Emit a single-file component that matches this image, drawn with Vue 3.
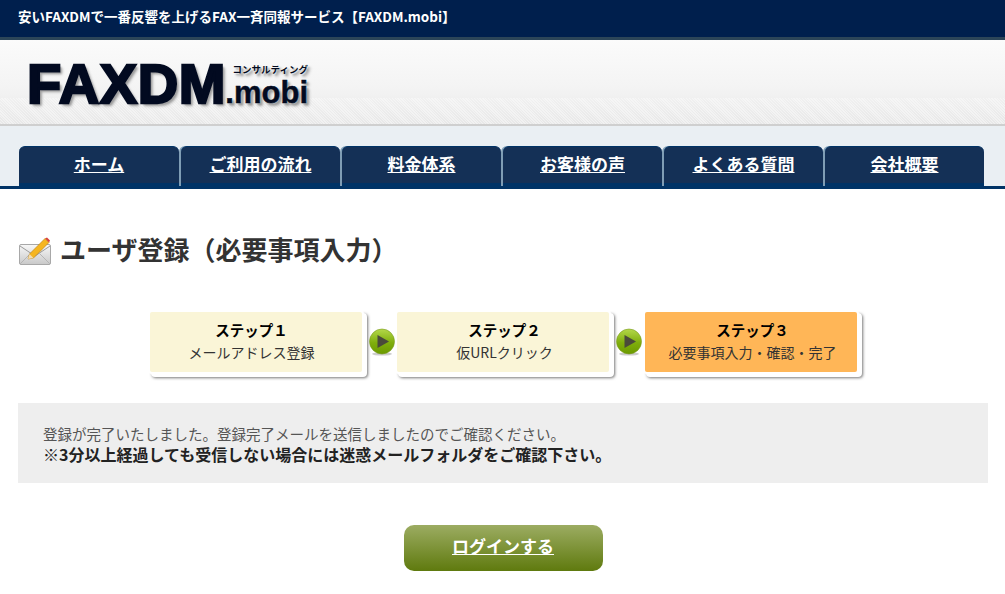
<script setup>
const navItems = ['ホーム', 'ご利用の流れ', '料金体系', 'お客様の声', 'よくある質問', '会社概要']
const steps = [
  { title: 'ステップ１', text: 'メールアドレス登録', active: false },
  { title: 'ステップ２', text: '仮URLクリック', active: false },
  { title: 'ステップ３', text: '必要事項入力・確認・完了', active: true },
]
</script>

<template>
  <div class="page">
    <div class="topbar">安いFAXDMで一番反響を上げるFAX一斉同報サービス【FAXDM.mobi】</div>
    <header class="header">
      <div class="logo">
        <span class="logo-main">FAXDM</span>
        <span class="logo-side">
          <span class="logo-sub">コンサルティング</span>
          <span class="logo-mobi">.mobi</span>
        </span>
      </div>
    </header>
    <nav class="nav">
      <a v-for="item in navItems" :key="item" class="tab">{{ item }}</a>
    </nav>
    <main class="main">
      <h1 class="title">
        <svg class="mail" viewBox="0 0 32 28" width="32" height="28">
          <defs>
            <linearGradient id="env" x1="0" y1="0" x2="0" y2="1">
              <stop offset="0" stop-color="#f8f8f8" />
              <stop offset="1" stop-color="#c9c9c9" />
            </linearGradient>
          </defs>
          <rect x="0.5" y="7.5" width="31" height="20" rx="1.5" fill="url(#env)" stroke="#a8a8a8" />
          <path d="M1 9 L16 19 L31 9" fill="none" stroke="#9a9a9a" />
          <path d="M1 27 L12 16 M31 27 L20 16" fill="none" stroke="#b5b5b5" />
          <path d="M9 22 L10.5 17 L26 1.5 L30 5.5 L14.5 21 Z" fill="#f5b51f" stroke="#b67c10" stroke-width="0.6" />
          <path d="M9 22 L10.5 17 L14.5 21 Z" fill="#f3dcb0" />
          <path d="M26 1.5 L28 0.5 L31 3.5 L30 5.5 Z" fill="#d8433b" />
        </svg>
        <span class="title-text">ユーザ登録（必要事項入力）</span>
      </h1>

      <div class="steps">
        <template v-for="(step, i) in steps" :key="step.title">
          <div class="step" :class="{ active: step.active }">
            <strong>{{ step.title }}</strong>
            <span>{{ step.text }}</span>
          </div>
          <svg v-if="i < steps.length - 1" class="arrow" viewBox="0 0 28 28" width="28" height="28">
            <defs>
              <linearGradient :id="'ball' + i" x1="0" y1="0" x2="0" y2="1">
                <stop offset="0" stop-color="#b4d84a" />
                <stop offset="0.55" stop-color="#7fae0c" />
                <stop offset="1" stop-color="#6b9a00" />
              </linearGradient>
            </defs>
            <ellipse cx="14" cy="26" rx="10" ry="1.6" fill="#ccc" />
            <circle cx="14" cy="13.5" r="12.5" :fill="'url(#ball' + i + ')'" stroke="#7a9a20" stroke-width="0.6" />
            <path d="M9.5 7 L21 13.5 L9.5 20 Z" fill="#4a4a3a" />
          </svg>
        </template>
      </div>

      <div class="message">
        <p>登録が完了いたしました。登録完了メールを送信しましたのでご確認ください。</p>
        <p class="strong">※3分以上経過しても受信しない場合には迷惑メールフォルダをご確認下さい。</p>
      </div>

      <div class="action">
        <a class="login">ログインする</a>
      </div>
    </main>
  </div>
</template>

<style scoped>
.page {
  width: 1005px;
  height: 594px;
  overflow: hidden;
  background: #fff;
  font-family: "Noto Sans CJK JP", "Liberation Sans", sans-serif;
  color: #333;
}
.topbar {
  height: 37px;
  box-sizing: content-box;
  border-bottom: 3px solid #2c4558;
  background: #001f4d;
  color: #fff;
  font-size: 13.5px;
  font-weight: 700;
  line-height: 33px;
  padding-left: 18px;
}
.header {
  height: 84px;
  border-bottom: 2px solid #cfcfcf;
  background:
    repeating-linear-gradient(45deg, transparent 0 1px, rgba(255, 255, 255, 0.4) 1px 2px) bottom / 100% 26px no-repeat,
    linear-gradient(#fbfbfb, #f4f4f4 55%, #e8e8e8);
  box-sizing: content-box;
  padding-left: 27px;
}
.logo {
  display: flex;
  align-items: flex-start;
  padding-top: 12px;
  color: #020a20;
  font-family: "Liberation Sans", sans-serif;
  font-weight: 700;
  text-shadow: 0 0 2px #fff, 2px 2px 2px #999, 3px 3px 3px #aaa;
}
.logo-main {
  font-size: 56px;
  line-height: 64px;
  -webkit-text-stroke: 2.4px #020a20;
  letter-spacing: 0.6px;
}
.logo-side {
  display: flex;
  flex-direction: column;
  align-items: flex-end;
  width: 82px;
  flex: none;
}
.logo-sub {
  font-family: "Noto Sans CJK JP", sans-serif;
  font-size: 9.5px;
  line-height: 10px;
  margin-top: 12px;
  white-space: nowrap;
}
.logo-mobi {
  font-size: 31px;
  line-height: 32px;
  margin-top: 3px;
  -webkit-text-stroke: 0.5px #020a20;
}
.nav {
  display: flex;
  height: 60px;
  box-sizing: content-box;
  padding: 0 21px 0 19px;
  align-items: flex-end;
  background: #eaeff3;
  border-bottom: 3px solid #003366;
}
.tab {
  flex: none;
  width: 159px;
  height: 40px;
  box-sizing: border-box;
  border-top: 1px solid #003366;
  border-bottom: 3px solid #003366;
  border-radius: 6px 6px 0 0;
  background: #143056;
  box-shadow: -2px 0 0 #7f9db5;
  margin-left: 2px;
  color: #fff;
  font-size: 17px;
  font-weight: 700;
  line-height: 34px;
  text-align: center;
  text-decoration: underline;
}
.tab:first-child {
  width: 160px;
  box-shadow: none;
  margin-left: 0;
}
.main {
  padding: 0 17px 0 18px;
}
.title {
  display: flex;
  align-items: center;
  gap: 10px;
  margin: 0;
  padding-top: 44px;
  height: 36px;
  font-size: 26px;
  line-height: 36px;
  font-weight: 700;
  color: #333;
  box-sizing: content-box;
}
.title-text {
  margin-top: -4px;
}
.mail {
  flex: none;
  margin-top: -1px;
  margin-left: 1px;
  margin-right: -1px;
}
.steps {
  display: flex;
  align-items: flex-start;
  margin: 43px 0 0 132px;
}
.step {
  width: 212px;
  height: 60px;
  box-sizing: border-box;
  flex: none;
  display: flex;
  flex-direction: column;
  align-items: center;
  padding: 7px 0 0 3px;
  border-radius: 2px;
  background: #faf5d7;
  box-shadow: 0 0 0 2px #fff, 3px 3px 0 2px #fff, 4px 4px 3px 2px #777;
  font-size: 14px;
  line-height: 22px;
  color: #333;
}
.step:first-child {
  padding: 7px 9px 0 0;
}
.step strong {
  color: #000;
  font-size: 14.5px;
  font-weight: 700;
}
.step.active {
  background: #ffb657;
}
.arrow {
  flex: none;
  margin: 16px 0 0 6px;
}
.arrow + .step {
  margin-left: 1px;
}
.arrow + .step.active {
  margin-left: 2px;
}
.message {
  height: 80px;
  box-sizing: border-box;
  margin-top: 31px;
  padding: 21px 25px 0;
  background: #eeeeee;
  font-size: 16px;
  line-height: 20px;
}
.message p {
  margin: 0;
  color: #555;
  font-size: 14.5px;
}
.message p.strong {
  color: #222;
  font-size: 16px;
  font-weight: 700;
}
.action {
  display: flex;
  justify-content: center;
  margin-top: 42px;
}
.login {
  display: block;
  width: 199px;
  height: 46px;
  border-radius: 10px;
  background: linear-gradient(#9cac62, #5f7a0e);
  color: #fff;
  font-size: 17px;
  font-weight: 700;
  line-height: 42px;
  text-align: center;
  text-decoration: underline;
}
</style>
